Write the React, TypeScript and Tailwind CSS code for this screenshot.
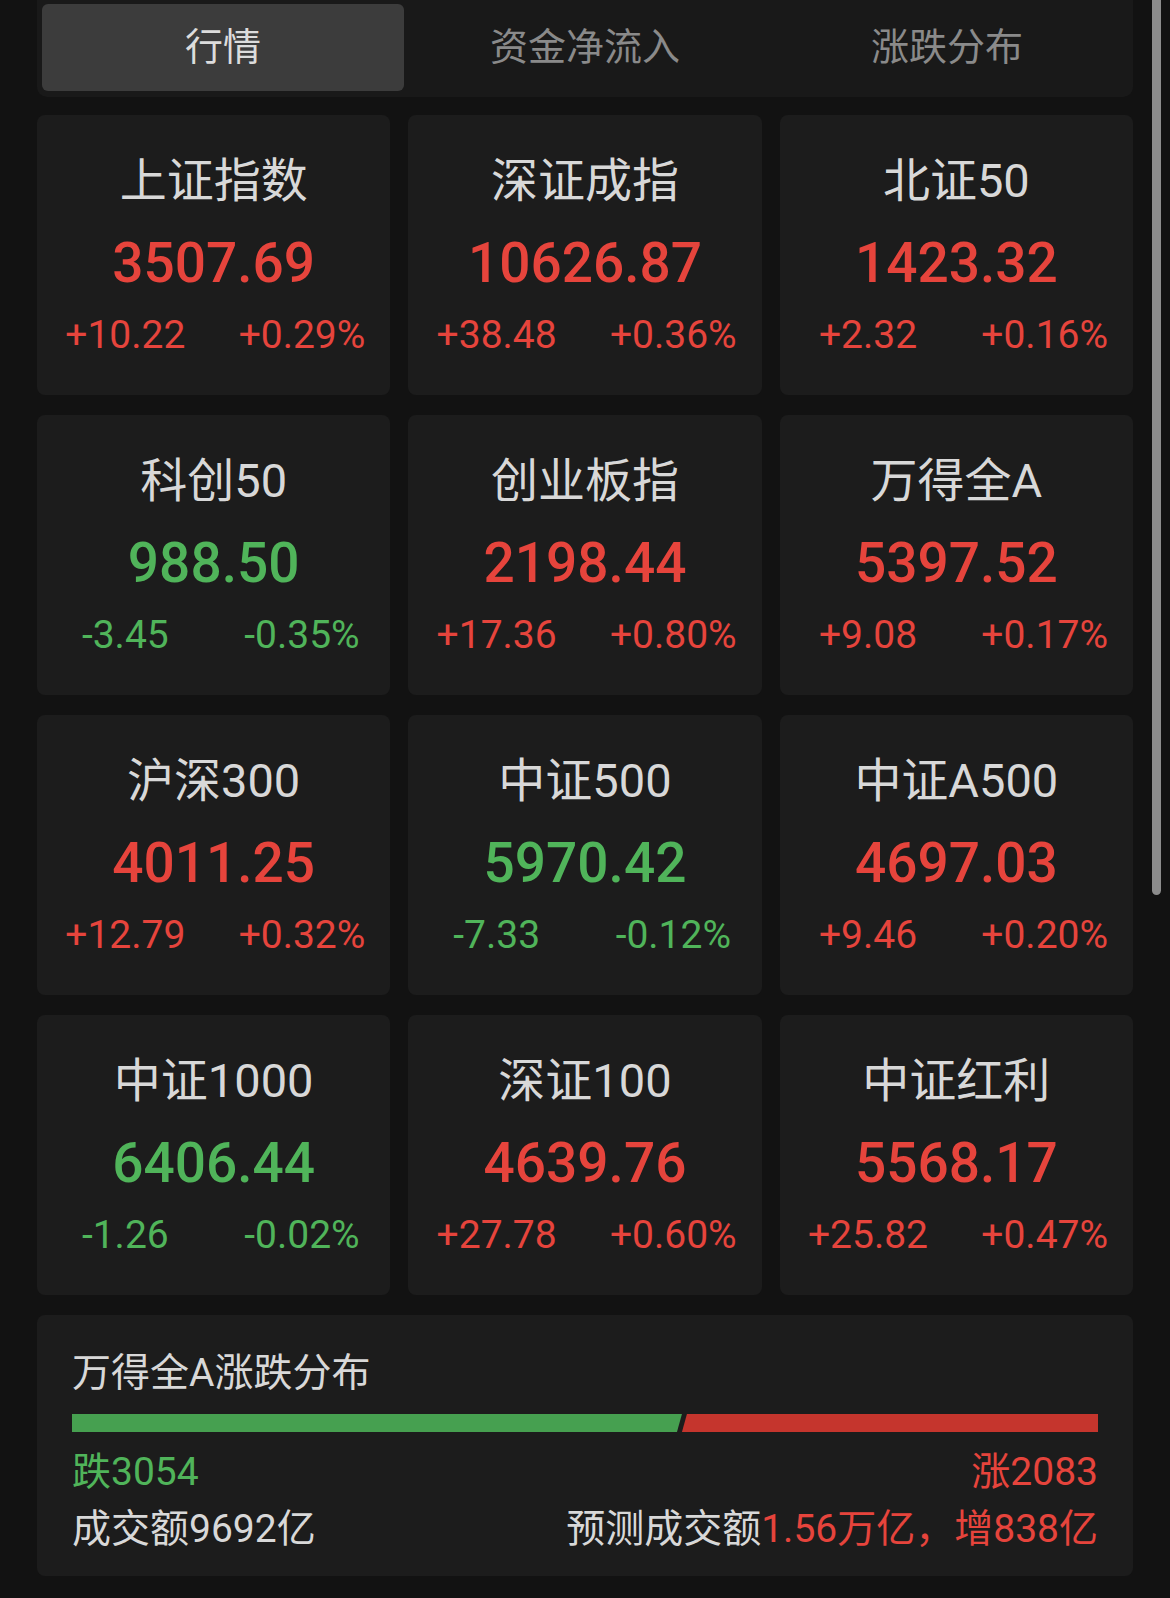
import React from 'react';

interface IndexQuote {
  name: string;
  value: string;
  change: string;
  percent: string;
  up: boolean;
}

const quotes: IndexQuote[] = [
  { name: '上证指数', value: '3507.69', change: '+10.22', percent: '+0.29%', up: true },
  { name: '深证成指', value: '10626.87', change: '+38.48', percent: '+0.36%', up: true },
  { name: '北证50', value: '1423.32', change: '+2.32', percent: '+0.16%', up: true },
  { name: '科创50', value: '988.50', change: '-3.45', percent: '-0.35%', up: false },
  { name: '创业板指', value: '2198.44', change: '+17.36', percent: '+0.80%', up: true },
  { name: '万得全A', value: '5397.52', change: '+9.08', percent: '+0.17%', up: true },
  { name: '沪深300', value: '4011.25', change: '+12.79', percent: '+0.32%', up: true },
  { name: '中证500', value: '5970.42', change: '-7.33', percent: '-0.12%', up: false },
  { name: '中证A500', value: '4697.03', change: '+9.46', percent: '+0.20%', up: true },
  { name: '中证1000', value: '6406.44', change: '-1.26', percent: '-0.02%', up: false },
  { name: '深证100', value: '4639.76', change: '+27.78', percent: '+0.60%', up: true },
  { name: '中证红利', value: '5568.17', change: '+25.82', percent: '+0.47%', up: true },
];

const tabs = ['行情', '资金净流入', '涨跌分布'];

const FONT = "font-['Roboto','Noto_Sans_CJK_SC',sans-serif]";

function QuoteCard({ q }: { q: IndexQuote }) {
  const color = q.up ? 'text-[#e6443c]' : 'text-[#50b45a]';
  return (
    <div className="h-[280px] rounded-[8px] bg-[#1c1c1c] flex flex-col items-center pt-[38px]">
      <div className="text-[47px] leading-[56px] text-[#d8d8d8]">{q.name}</div>
      <div className={`mt-[22px] text-[55px] leading-[64px] font-medium ${color}`}>{q.value}</div>
      <div className={`mt-[17px] w-full grid grid-cols-2 text-[39px] leading-[46px] ${color}`}>
        <span className="text-center">{q.change}</span>
        <span className="text-center">{q.percent}</span>
      </div>
    </div>
  );
}

export default function App() {
  const down = 3054;
  const up = 2083;
  const downPct = (down / (down + up)) * 100;

  return (
    <div className={`w-[1170px] h-[1598px] bg-[#121212] flex ${FONT}`}>
      <div className="ml-[37px] w-[1096px] flex flex-col">
        {/* Tabs */}
        <div className="h-[97px] bg-[#191919] rounded-b-[10px] px-[5px] pt-[4px] pb-[6px] grid grid-cols-3">
          {tabs.map((t, i) => (
            <div
              key={t}
              className={`flex items-center justify-center rounded-[6px] text-[38px] ${
                i === 0 ? 'bg-[#3c3c3c] text-[#dcdcdc]' : 'text-[#8a8a8a]'
              }`}
            >
              {t}
            </div>
          ))}
        </div>

        {/* Index cards */}
        <div className="mt-[18px] grid grid-cols-3 gap-x-[18px] gap-y-[20px]">
          {quotes.map((q) => (
            <QuoteCard key={q.name} q={q} />
          ))}
        </div>

        {/* Breadth */}
        <div className="mt-[20px] h-[261px] rounded-[8px] bg-[#1c1c1c] px-[35px] pt-[35px]">
          <div className="text-[39px] leading-[46px] text-[#d8d8d8]">万得全A涨跌分布</div>
          <div className="mt-[18px] h-[18px] flex">
            <div
              className="h-full bg-[#46a050] [clip-path:polygon(0_0,100%_0,calc(100%-5px)_100%,0_100%)]"
              style={{ width: `${downPct}%` }}
            />
            <div className="h-full flex-1 bg-[#c5352d] [clip-path:polygon(5px_0,100%_0,100%_100%,0_100%)]" />
          </div>
          <div className="mt-[17px] flex justify-between text-[39px] leading-[46px]">
            <span className="text-[#50b45a]">跌{down}</span>
            <span className="text-[#e6443c]">涨{up}</span>
          </div>
          <div className="mt-[11px] flex justify-between text-[39px] leading-[46px] text-[#d8d8d8]">
            <span>成交额9692亿</span>
            <span>
              预测成交额<span className="text-[#e6443c]">1.56万亿，增838亿</span>
            </span>
          </div>
        </div>
      </div>

      {/* Scrollbar */}
      <div className="ml-[19px] w-[9px] h-[895px] rounded-b-full bg-[#8c8c8c]" />
    </div>
  );
}
